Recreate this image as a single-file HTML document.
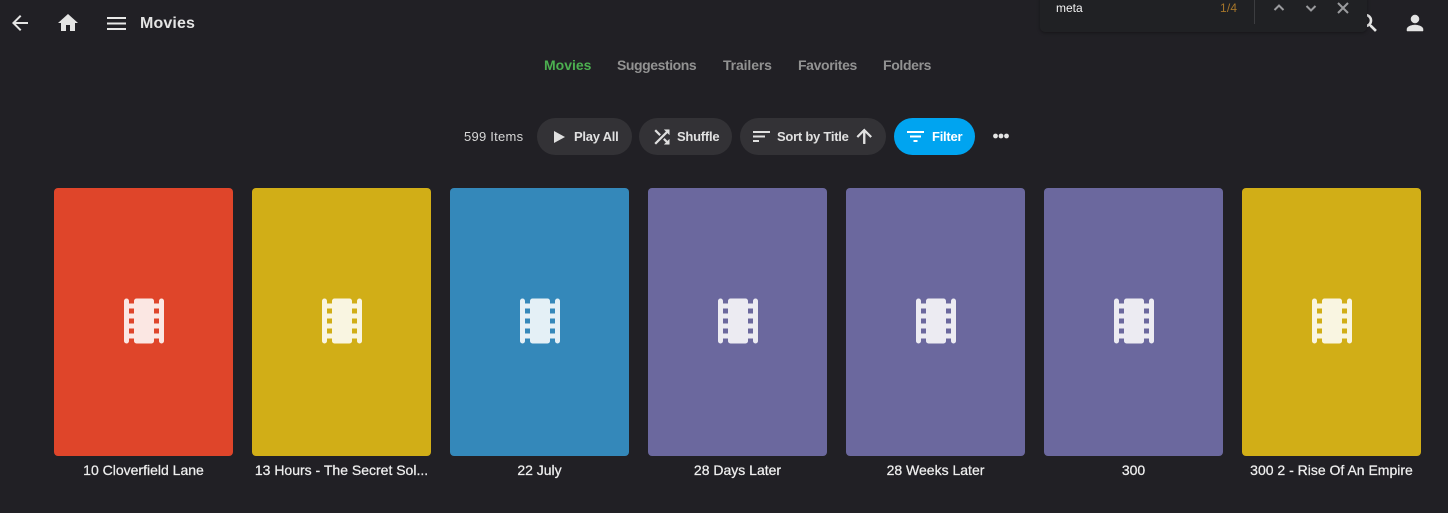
<!DOCTYPE html>
<html><head><meta charset="utf-8">
<style>
*{box-sizing:border-box}
html,body{margin:0;padding:0;width:1448px;height:513px;overflow:hidden;background:#212025;font-family:"Liberation Sans",sans-serif;color:#e4e4e4}
.t{position:absolute;white-space:nowrap;line-height:16px}
.b{font-weight:bold}
svg{position:absolute;display:block}
.pill{position:absolute;top:118px;height:37px;border-radius:19px;background:#333236}
.card{position:absolute;top:188px;width:179px;height:268px;border-radius:4px}
.card svg{left:59.5px;top:102.5px}
.cap{position:absolute;top:462px;width:179px;text-align:center;font-size:14px;line-height:16px;color:#eee;white-space:nowrap;-webkit-text-stroke:.25px #eee}
.tab{position:absolute;top:57px;font-size:14px;font-weight:bold;line-height:16px;color:#929292;white-space:nowrap}
.lbl{position:absolute;top:129px;font-size:13px;font-weight:bold;line-height:16px;color:#e0e0e0;white-space:nowrap;letter-spacing:-.25px}
</style></head><body>

<svg style="left:7.5px;top:11px" width="24" height="24" viewBox="0 0 24 24" fill="#e4e4e4"><path d="M20 11H7.83l5.59-5.59L12 4l-8 8 8 8 1.41-1.41L7.83 13H20v-2z"/></svg>
<svg style="left:56px;top:11px" width="24" height="24" viewBox="0 0 24 24" fill="#e4e4e4"><path d="M10 20v-6h4v6h5v-8h3L12 3 2 12h3v8z"/></svg>
<svg style="left:107px;top:16px" width="19" height="14" viewBox="0 0 19 14" fill="#e8e8e8"><rect x="0" y="1" width="19" height="2"/><rect x="0" y="6.5" width="19" height="2"/><rect x="0" y="12" width="19" height="2"/></svg>
<div class="t b" style="left:140px;top:16px;font-size:16px;color:#e4e4e4;letter-spacing:.13px">Movies</div>

<svg style="left:1356px;top:11px" width="24" height="24" viewBox="0 0 24 24" fill="#e4e4e4" stroke="#e4e4e4" stroke-width=".6"><path d="M15.5 14h-.79l-.28-.27C15.41 12.59 16 11.11 16 9.5 16 5.91 13.09 3 9.5 3S3 5.91 3 9.5 5.91 16 9.5 16c1.61 0 3.09-.59 4.23-1.57l.27.28v.79l5 4.99L20.49 19l-4.99-5zm-6 0C7.01 14 5 11.99 5 9.5S7.01 5 9.5 5 14 7.01 14 9.5 11.99 14 9.5 14z"/></svg>
<svg style="left:1403px;top:11px" width="24" height="24" viewBox="0 0 24 24" fill="#e4e4e4" stroke="#e4e4e4" stroke-width=".5"><path d="M12 12c2.21 0 4-1.79 4-4s-1.79-4-4-4-4 1.79-4 4 1.79 4 4 4zm0 2c-2.67 0-8 1.34-8 4v2h16v-2c0-2.66-5.33-4-8-4z"/></svg>

<div style="position:absolute;left:1040px;top:-2px;width:327px;height:34px;background:#202124;border-radius:0 0 5px 5px;box-shadow:0 1px 3px rgba(0,0,0,.35)"></div>
<div class="t" style="left:1056px;top:0;font-size:12px;color:#f2f2f2">meta</div>
<div class="t" style="left:1220px;top:0;font-size:12px;color:#a5752a;letter-spacing:.2px">1/4</div>
<div style="position:absolute;left:1254px;top:0;width:1px;height:24px;background:#3c3d40"></div>
<svg style="left:1272px;top:1px" width="14" height="14" viewBox="0 0 14 14" fill="none" stroke="#9a9b9e" stroke-width="2"><path d="M2.5 9L7 4.5 11.5 9"/></svg>
<svg style="left:1304px;top:1px" width="14" height="14" viewBox="0 0 14 14" fill="none" stroke="#9a9b9e" stroke-width="2"><path d="M2.5 5L7 9.5 11.5 5"/></svg>
<svg style="left:1336px;top:1px" width="14" height="14" viewBox="0 0 14 14" fill="none" stroke="#9a9b9e" stroke-width="2"><path d="M2 2L12 12M12 2L2 12"/></svg>

<div class="tab" style="left:544px;color:#4caf50">Movies</div>
<div class="tab" style="left:617px;letter-spacing:-.43px">Suggestions</div>
<div class="tab" style="left:723px;letter-spacing:-.12px">Trailers</div>
<div class="tab" style="left:798px;letter-spacing:-.37px">Favorites</div>
<div class="tab" style="left:883px;letter-spacing:-.35px">Folders</div>

<div class="t" style="left:464px;top:129px;font-size:13px;color:#d6d6d6;letter-spacing:.25px">599 Items</div>

<div class="pill" style="left:537px;width:95px"></div>
<svg style="left:554px;top:131px" width="11" height="12" viewBox="0 0 11 12" fill="#e0e0e0"><path d="M0 0L11 6 0 12z"/></svg>
<div class="lbl" style="left:574px">Play All</div>

<div class="pill" style="left:639px;width:93px"></div>
<svg style="left:650.5px;top:125.5px" width="22" height="22" viewBox="0 0 24 24" fill="#e0e0e0" stroke="#e0e0e0" stroke-width=".5"><path d="M10.59 9.17L5.41 4 4 5.41l5.17 5.17 1.42-1.41zM14.5 4l2.04 2.04L4 18.59 5.41 20 17.96 7.46 20 9.5V4h-5.5zm.33 9.41l-1.41 1.41 3.13 3.13L14.5 20H20v-5.5l-2.04 2.04-3.13-3.13z"/></svg>
<div class="lbl" style="left:677px">Shuffle</div>

<div class="pill" style="left:740px;width:146px"></div>
<svg style="left:753px;top:131px" width="17" height="11" viewBox="0 0 17 11" fill="#e0e0e0"><rect width="17" height="2"/><rect y="4.5" width="12" height="2"/><rect y="9" width="6" height="2"/></svg>
<div class="lbl" style="left:777px">Sort by Title</div>
<svg style="left:853.25px;top:125px" width="22.5" height="22.5" viewBox="0 0 24 24" fill="#e0e0e0" stroke="#e0e0e0" stroke-width=".5"><path d="M4 12l1.41 1.41L11 7.83V20h2V7.83l5.58 5.59L20 12l-8-8-8 8z"/></svg>

<div class="pill" style="left:894px;width:81px;background:#00a4f0"></div>
<svg style="left:907px;top:131px" width="17" height="11" viewBox="0 0 17 11" fill="#fff"><rect width="17" height="2"/><rect x="3" y="4.5" width="11" height="2"/><rect x="6.5" y="9" width="4" height="2"/></svg>
<div class="lbl" style="left:932px;color:#fff">Filter</div>

<svg style="left:993px;top:132px" width="16" height="8" viewBox="0 0 16 8" fill="#e4e4e4"><circle cx="2.5" cy="4" r="2.4"/><circle cx="8" cy="4" r="2.4"/><circle cx="13.5" cy="4" r="2.4"/></svg>

<div class="card" style="left:54px;background:#df452a"><svg width="60" height="60" viewBox="0 0 24 24" fill="#fff" fill-opacity=".87"><path fill-rule="evenodd" d="M5 3a1 1 0 0 1 1 1V5h2V4a1 1 0 0 1 1-1h6a1 1 0 0 1 1 1V5h2V4a1 1 0 0 1 2 0v16a1 1 0 0 1-2 0V19h-2v1a1 1 0 0 1-1 1H9a1 1 0 0 1-1-1V19H6v1a1 1 0 0 1-2 0V4a1 1 0 0 1 1-1zM6 7v2h2V7zm0 4v2h2v-2zm0 4v2h2v-2zM16 7v2h2V7zm0 4v2h2v-2zm0 4v2h2v-2z"/></svg></div>
<div class="card" style="left:252px;background:#d1ae17"><svg width="60" height="60" viewBox="0 0 24 24" fill="#fff" fill-opacity=".87"><path fill-rule="evenodd" d="M5 3a1 1 0 0 1 1 1V5h2V4a1 1 0 0 1 1-1h6a1 1 0 0 1 1 1V5h2V4a1 1 0 0 1 2 0v16a1 1 0 0 1-2 0V19h-2v1a1 1 0 0 1-1 1H9a1 1 0 0 1-1-1V19H6v1a1 1 0 0 1-2 0V4a1 1 0 0 1 1-1zM6 7v2h2V7zm0 4v2h2v-2zm0 4v2h2v-2zM16 7v2h2V7zm0 4v2h2v-2zm0 4v2h2v-2z"/></svg></div>
<div class="card" style="left:450px;background:#3488ba"><svg width="60" height="60" viewBox="0 0 24 24" fill="#fff" fill-opacity=".87"><path fill-rule="evenodd" d="M5 3a1 1 0 0 1 1 1V5h2V4a1 1 0 0 1 1-1h6a1 1 0 0 1 1 1V5h2V4a1 1 0 0 1 2 0v16a1 1 0 0 1-2 0V19h-2v1a1 1 0 0 1-1 1H9a1 1 0 0 1-1-1V19H6v1a1 1 0 0 1-2 0V4a1 1 0 0 1 1-1zM6 7v2h2V7zm0 4v2h2v-2zm0 4v2h2v-2zM16 7v2h2V7zm0 4v2h2v-2zm0 4v2h2v-2z"/></svg></div>
<div class="card" style="left:648px;background:#6b689e"><svg width="60" height="60" viewBox="0 0 24 24" fill="#fff" fill-opacity=".87"><path fill-rule="evenodd" d="M5 3a1 1 0 0 1 1 1V5h2V4a1 1 0 0 1 1-1h6a1 1 0 0 1 1 1V5h2V4a1 1 0 0 1 2 0v16a1 1 0 0 1-2 0V19h-2v1a1 1 0 0 1-1 1H9a1 1 0 0 1-1-1V19H6v1a1 1 0 0 1-2 0V4a1 1 0 0 1 1-1zM6 7v2h2V7zm0 4v2h2v-2zm0 4v2h2v-2zM16 7v2h2V7zm0 4v2h2v-2zm0 4v2h2v-2z"/></svg></div>
<div class="card" style="left:846px;background:#6b689e"><svg width="60" height="60" viewBox="0 0 24 24" fill="#fff" fill-opacity=".87"><path fill-rule="evenodd" d="M5 3a1 1 0 0 1 1 1V5h2V4a1 1 0 0 1 1-1h6a1 1 0 0 1 1 1V5h2V4a1 1 0 0 1 2 0v16a1 1 0 0 1-2 0V19h-2v1a1 1 0 0 1-1 1H9a1 1 0 0 1-1-1V19H6v1a1 1 0 0 1-2 0V4a1 1 0 0 1 1-1zM6 7v2h2V7zm0 4v2h2v-2zm0 4v2h2v-2zM16 7v2h2V7zm0 4v2h2v-2zm0 4v2h2v-2z"/></svg></div>
<div class="card" style="left:1044px;background:#6b689e"><svg width="60" height="60" viewBox="0 0 24 24" fill="#fff" fill-opacity=".87"><path fill-rule="evenodd" d="M5 3a1 1 0 0 1 1 1V5h2V4a1 1 0 0 1 1-1h6a1 1 0 0 1 1 1V5h2V4a1 1 0 0 1 2 0v16a1 1 0 0 1-2 0V19h-2v1a1 1 0 0 1-1 1H9a1 1 0 0 1-1-1V19H6v1a1 1 0 0 1-2 0V4a1 1 0 0 1 1-1zM6 7v2h2V7zm0 4v2h2v-2zm0 4v2h2v-2zM16 7v2h2V7zm0 4v2h2v-2zm0 4v2h2v-2z"/></svg></div>
<div class="card" style="left:1242px;background:#d1ae17"><svg width="60" height="60" viewBox="0 0 24 24" fill="#fff" fill-opacity=".87"><path fill-rule="evenodd" d="M5 3a1 1 0 0 1 1 1V5h2V4a1 1 0 0 1 1-1h6a1 1 0 0 1 1 1V5h2V4a1 1 0 0 1 2 0v16a1 1 0 0 1-2 0V19h-2v1a1 1 0 0 1-1 1H9a1 1 0 0 1-1-1V19H6v1a1 1 0 0 1-2 0V4a1 1 0 0 1 1-1zM6 7v2h2V7zm0 4v2h2v-2zm0 4v2h2v-2zM16 7v2h2V7zm0 4v2h2v-2zm0 4v2h2v-2z"/></svg></div>

<div class="cap" style="left:54px">10 Cloverfield Lane</div>
<div class="cap" style="left:252px">13 Hours - The Secret Sol...</div>
<div class="cap" style="left:450px">22 July</div>
<div class="cap" style="left:648px">28 Days Later</div>
<div class="cap" style="left:846px">28 Weeks Later</div>
<div class="cap" style="left:1044px">300</div>
<div class="cap" style="left:1242px">300 2 - Rise Of An Empire</div>

</body></html>
